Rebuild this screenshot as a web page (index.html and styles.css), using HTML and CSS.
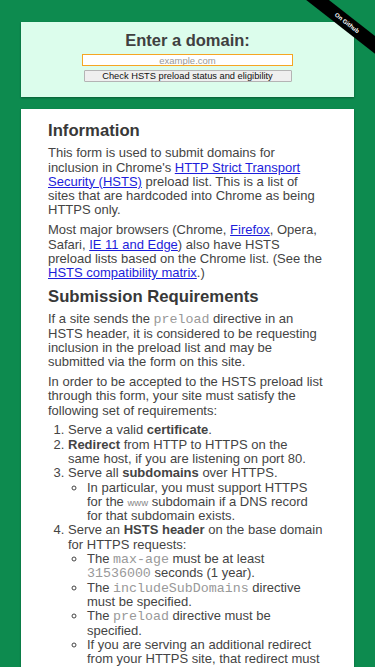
FILE: index.html
```html
<!DOCTYPE html>
<html>
<head>
	<meta charset="utf-8"/>
	<title>HSTS Preload List Submission</title>
	<link rel="stylesheet" href="styles.css">
</head>
<body>
	<div class="ribbon"><a href="#">On Github</a></div>

	<form class="domain-form">
		<h1>Enter a domain:</h1>
		<input class="domain-input" type="text" placeholder="example.com">
		<button class="check-btn" type="button">Check HSTS preload status and eligibility</button>
	</form>

	<div class="card">
		<h2>Information</h2>
		<p>This form is used to submit domains for inclusion in Chrome's <a href="#">HTTP Strict Transport Security (HSTS)</a> preload list. This is a list of sites that are hardcoded into Chrome as being HTTPS only.</p>
		<p>Most major browsers (Chrome, <a href="#">Firefox</a>, Opera, Safari, <a href="#">IE 11 and Edge</a>) also have HSTS preload lists based on the Chrome list. (See the <a href="#">HSTS compatibility matrix</a>.)</p>

		<h2>Submission Requirements</h2>
		<p>If a site sends the <code>preload</code> directive in an HSTS header, it is considered to be requesting inclusion in the preload list and may be submitted via the form on this site.</p>
		<p>In order to be accepted to the HSTS preload list through this form, your site must satisfy the following set of requirements:</p>
		<ol>
			<li>Serve a valid <b>certificate</b>.</li>
			<li><b>Redirect</b> from HTTP to HTTPS on the<br>same host, if you are listening on port 80.</li>
			<li>Serve all <b>subdomains</b> over HTTPS.
				<ul>
					<li>In particular, you must support HTTPS for the <code class="small">www</code> subdomain if a DNS record for that subdomain exists.</li>
				</ul>
			</li>
			<li>Serve an <b>HSTS header</b> on the base domain for HTTPS requests:
				<ul>
					<li>The <code>max-age</code> must be at least <code>31536000</code> seconds (1 year).</li>
					<li>The <code>includeSubDomains</code> directive must be specified.</li>
					<li>The <code>preload</code> directive must be specified.</li>
					<li>If you are serving an additional redirect from your HTTPS site, that redirect must still have the HSTS header (rather than the page it redirects to).</li>
				</ul>
			</li>
		</ol>
		<p>For more details on HSTS, please see <a href="#">RFC 6797</a>. Here is an example of a valid HSTS header:</p>
	</div>
</body>
</html>
```

FILE: styles.css
```css
*{margin: 0;padding: 0;box-sizing: border-box;}
body{
	background: #0d8b4f;
	font-family: "Liberation Sans", Arial, sans-serif;
	color: #444;
	font-size: 13px;
	line-height: 1.1;
}

/* ribbon */
.ribbon{
	position: absolute;
	top: 0;
	right: 0;
	width: 100px;
	height: 70px;
	overflow: hidden;
}
.ribbon a{
	position: absolute;
	left: 2px;
	top: 16px;
	width: 140px;
	height: 14px;
	line-height: 14px;
	background: #000;
	color: #fff;
	font-size: 6px;
	font-weight: bold;
	text-align: center;
	text-decoration: none;
	transform: rotate(38deg);
}

/* form panel */
.domain-form{
	margin: 22px 21px 0;
	padding: 8.6px 0 15px;
	background: #dcfdec;
	box-shadow: 0 1px 2px rgba(0,0,0,0.35);
	text-align: center;
}
.domain-form h1{
	font-size: 16.5px;
	color: #404040;
	line-height: 1.1;
	margin-bottom: 5.7px;
}
.domain-input{
	display: block;
	width: 211px;
	height: 11.5px;
	margin: 0 auto 4.5px;
	border: 1px solid #f5a623;
	background: #fff;
	font-family: "Liberation Sans", Arial, sans-serif;
	font-size: 9.5px;
	line-height: 9px;
	text-align: center;
	outline: none;
}
.domain-input::placeholder{
	color: #999;
}
.check-btn{
	display: block;
	width: 208px;
	height: 11.5px;
	margin: 0 auto;
	border: 1px solid #b4b4b4;
	border-radius: 1px;
	background: #efefef;
	color: #111;
	font-family: "Liberation Sans", Arial, sans-serif;
	font-size: 9.3px;
	line-height: 9px;
}

/* info card */
.card{
	margin: 12px 21px 0;
	padding: 13.5px 28px 30px 27px;
	background: #fff;
	box-shadow: 0 1px 2px rgba(0,0,0,0.3);
}
.card h2{
	font-size: 16.7px;
	line-height: 1.1;
	color: #383838;
	margin: 8px 0 5.5px;
}
.card h2:first-child{
	margin-top: 0;
}
.card p{
	margin: 5.5px 0;
}
.card a{
	color: #1d1ddb;
}
.card code{
	font-family: "Liberation Mono", "Courier New", monospace;
	font-size: 13.3px;
	color: #999;
	line-height: 1;
}
.card code.small{
	font-family: "Liberation Sans", Arial, sans-serif;
	font-size: 9.5px;
	color: #888;
}
.card ol{
	margin: 5.5px 0;
	padding-left: 20px;
}
.card ul{
	padding-left: 19px;
	list-style-type: circle;
}
```
